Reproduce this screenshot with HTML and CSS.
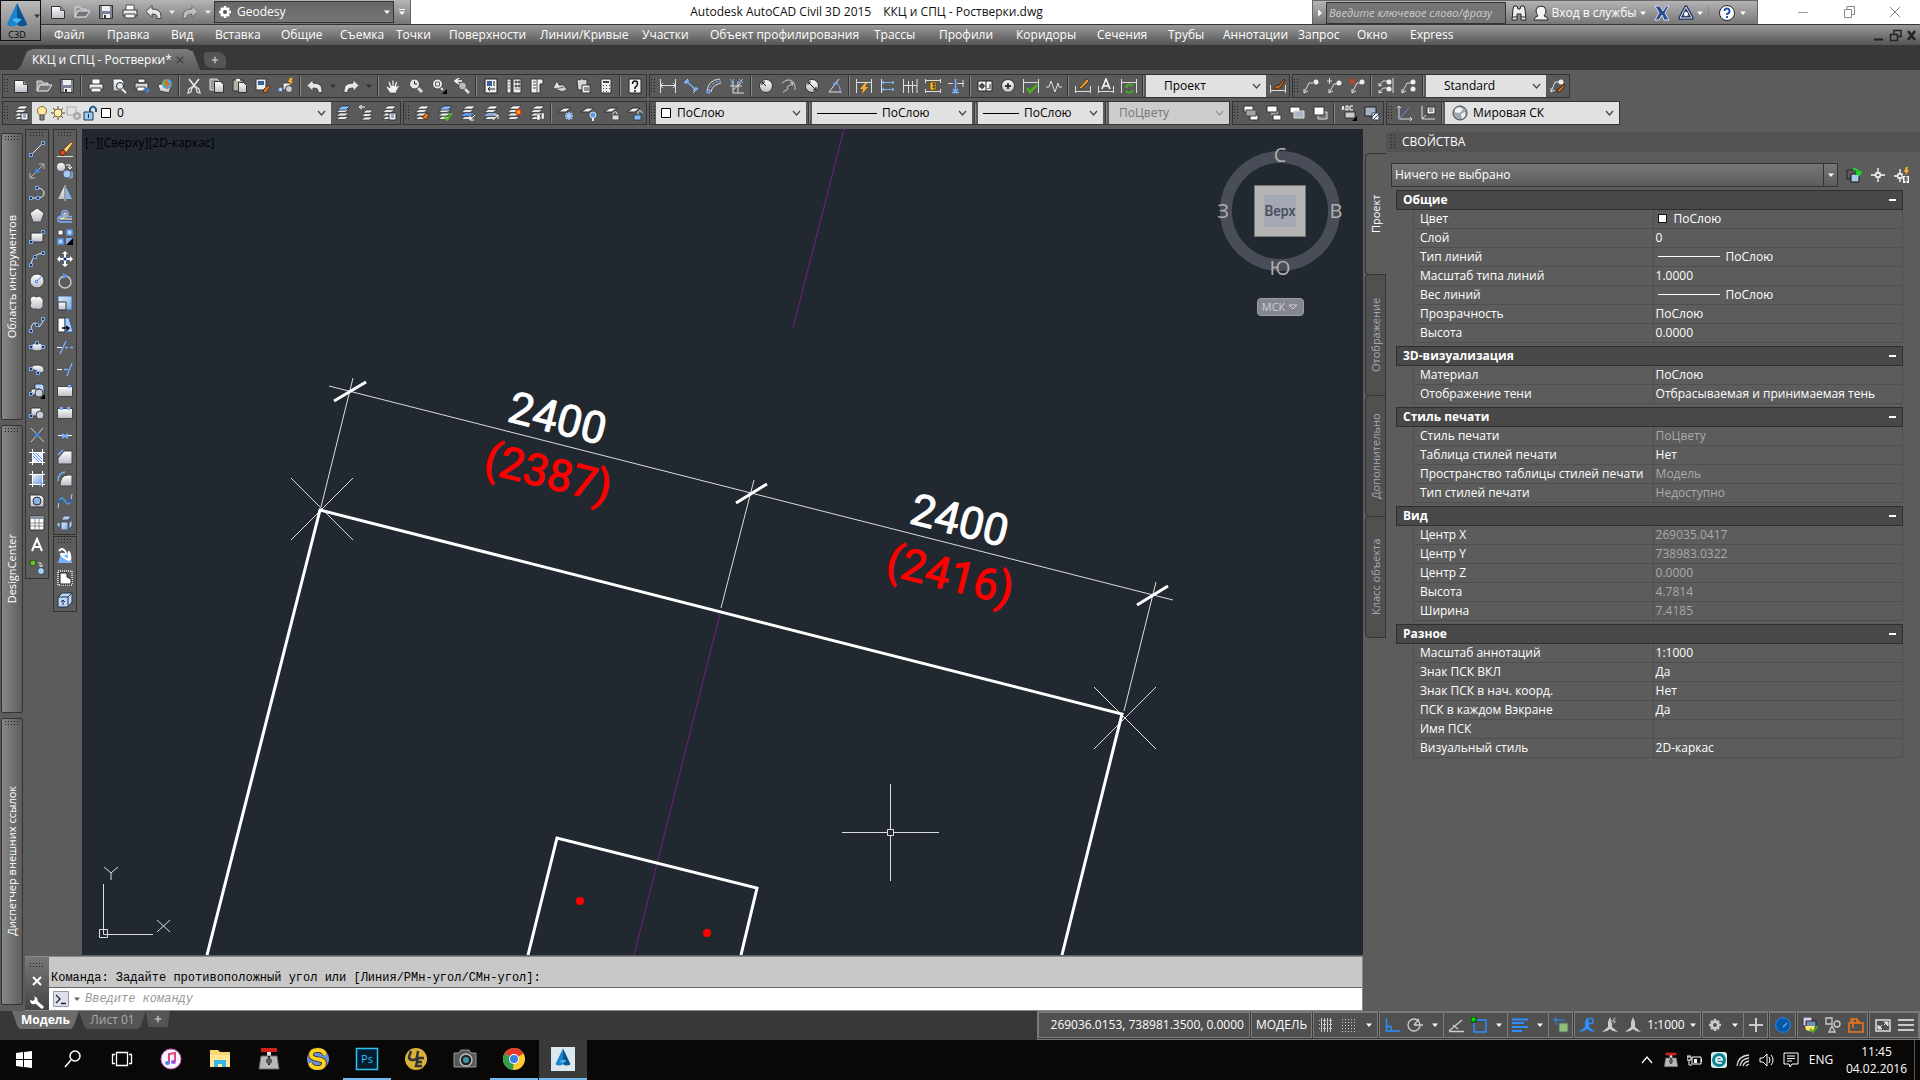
FILE: index.html
```html
<!DOCTYPE html>
<html lang="ru">
<head>
<meta charset="utf-8">
<title>Autodesk AutoCAD Civil 3D 2015</title>
<link rel="stylesheet" href="styles.css">
</head>
<body>
<svg class="sprite" aria-hidden="true">
  <defs>
    <linearGradient id="gw" x1="0" y1="0" x2="0" y2="1"><stop offset="0" stop-color="#fff"/><stop offset="1" stop-color="#b9bcc6"/></linearGradient>
    <linearGradient id="gb" x1="0" y1="0" x2="1" y2="1"><stop offset="0" stop-color="#dcebff"/><stop offset="1" stop-color="#7fa6d8"/></linearGradient>
  </defs>
  <symbol id="new" viewBox="0 0 16 16"><path d="M1.500 2.500h9l4 4v8h-13z" fill="url(#gw)" stroke="#333"/><path d="M10.500 2.500v4h4" fill="#999" stroke="#555"/></symbol>
  <symbol id="open" viewBox="0 0 16 16"><path d="M1 13V3h5l1 2h5v2" fill="#999" stroke="#ddd"/><path d="M1 13l3-6h12l-4 6z" fill="#70757d" stroke="#eee"/></symbol>
  <symbol id="save" viewBox="0 0 16 16"><path d="M1.500 1.500h13v13h-13z" fill="#7b8494" stroke="#333"/><path d="M4 2h8v5H4zM5 10h7v4H5z" fill="#eee"/><path d="M6 11h2v3H6z" fill="#333"/></symbol>
  <symbol id="print" viewBox="0 0 16 16"><path d="M4 1h8v6H4z" fill="#fff" stroke="#555"/><path d="M1 6h14v6H1z" fill="url(#gw)" stroke="#333"/><path d="M3 10h10v4H3z" fill="#f4f4f4" stroke="#444"/></symbol>
  <symbol id="preview" viewBox="0 0 16 16"><path d="M2 1h8l3 3v9H2z" fill="url(#gw)" stroke="#444"/><circle cx="9" cy="8" r="3.500" fill="#dfe8f2" stroke="#222"/><path d="M11 11l4 4" stroke="#eee" stroke-width="2"/></symbol>
  <symbol id="plot" viewBox="0 0 16 16"><path d="M4 1h7v4H4zM1 5h13v6H1z" fill="url(#gw)" stroke="#333"/><path d="M3 9h8v4H3z" fill="#fff" stroke="#444"/><path d="M9 12h5m-2-2l3 2-3 3" fill="none" stroke="#3d82e0" stroke-width="1.500"/></symbol>
  <symbol id="globe" viewBox="0 0 16 16"><path d="M1 7l7-2 6 3-2 7-9-2z" fill="url(#gw)" stroke="#444"/><circle cx="10" cy="6" r="5" fill="#4aa8d8"/><path d="M7 2l3 3-2 3-3-2z" fill="#74b83a"/><path d="M10 1v10M7 4l7 3" stroke="#e56b1f" stroke-width="1.500"/></symbol>
  <symbol id="cut" viewBox="0 0 16 16"><path d="M3 1l7 9M13 1L6 10" stroke="#eee" stroke-width="1.500"/><path d="M6 9l-3 2-1 4 3-1zM10 9l3 2 1 4-3-1z" fill="none" stroke="#ddd" stroke-width="1.300"/></symbol>
  <symbol id="copy" viewBox="0 0 16 16"><path d="M1 1h7l2 2v9H1z" fill="#999" stroke="#ddd"/><path d="M5.500 3.500h6l3 3v8h-9z" fill="url(#gw)" stroke="#333"/></symbol>
  <symbol id="paste" viewBox="0 0 16 16"><path d="M1 2h10v11H1z" fill="#b6b0a2" stroke="#333"/><path d="M4 1h4v2H4z" fill="#eee"/><path d="M6.500 4.500h5l3 3v7h-8z" fill="url(#gw)" stroke="#333"/></symbol>
  <symbol id="match" viewBox="0 0 16 16"><path d="M1 1h10v11H1z" fill="#eee" stroke="#333"/><path d="M3 3h6v4H3z" fill="#3b5f9d"/><path d="M9 11l5-4 1 2-4 6-3-1z" fill="#d0762a" stroke="#5d2c08"/></symbol>
  <symbol id="bedit" viewBox="0 0 16 16"><path d="M5 5h7v7H5z" fill="url(#gw)" stroke="#444"/><circle cx="11" cy="11" r="3.500" fill="#c8cdd6" stroke="#444"/><path d="M1 10h3v3H1z" fill="#fff" stroke="#5a96f0"/><path d="M12 0l-2 4h2l-1 4 4-5h-2l2-3z" fill="#ffb32b"/></symbol>
  <symbol id="undo" viewBox="0 0 16 16"><path d="M6 1.500V5q9 0 9 7v2.500h-4V12q0-2-5-2v3.500L0 7.500z" fill="#e6e6e6" stroke="#444"/></symbol>
  <symbol id="redo" viewBox="0 0 16 16"><path d="M10 1.500V5q-9 0-9 7v2.500h4V12q0-2 5-2v3.500l6-6z" fill="#e6e6e6" stroke="#444"/></symbol>
  <symbol id="pan" viewBox="0 0 16 16"><path d="M5 15l-4-6 1-1 3 2-2-6 1.500-1 2.500 5V2h2v6l2-5 1.500 1-1 5 2-2 1 1-3 5v2z" fill="#f2f2f2" stroke="#444" stroke-width=".7"/></symbol>
  <symbol id="zoomrt" viewBox="0 0 16 16"><path d="M10 10l4 4" stroke="#ddd" stroke-width="3"/><circle cx="6.500" cy="6" r="5" fill="#e7e7e7" stroke="#444"/><path d="M6.500 3v3H9" fill="none" stroke="#222"/></symbol>
  <symbol id="zoomwin" viewBox="0 0 16 16"><circle cx="6.500" cy="6" r="5" fill="#e7e7e7" stroke="#444"/><path d="M4.500 4h4v4h-4z" fill="none" stroke="#666"/><path d="M10 10l2 2" stroke="#ddd" stroke-width="2"/><path d="M16 11v5h-5z" fill="#000"/></symbol>
  <symbol id="zoomprev" viewBox="0 0 16 16"><circle cx="8.500" cy="8" r="4" fill="#bbb" stroke="#444"/><path d="M11 11l4 4" stroke="#ddd" stroke-width="2.500"/><path d="M8 3H2m3-3L1 3l4 3" fill="none" stroke="#fff" stroke-width="1.500"/></symbol>
  <symbol id="props" viewBox="0 0 16 16"><path d="M2 1h12v14H2z" fill="#eee" stroke="#222"/><path d="M4 3h5v5H4z" fill="#3b6199"/><path d="M11 3v5M5 11h7M7 9l-2 2 2 2" fill="none" stroke="#222"/></symbol>
  <symbol id="dcenter" viewBox="0 0 16 16"><path d="M1 1h4v14H1zM7 1h8v14H7z" fill="#eee" stroke="#333"/><path d="M2 4h2M2 7h2M2 10h2M9 3h2v2H9zM12 3h2v2h-2zM9 7h2v2H9zM12 7h2v2h-2zM9 11h5" fill="#667" stroke="#444" stroke-width=".6"/></symbol>
  <symbol id="toolpal" viewBox="0 0 16 16"><path d="M2 1h12v5h-3v9H2z" fill="#eee" stroke="#333"/><path d="M4 4h3M4 7h3M4 10h3M8 1v14" stroke="#555"/></symbol>
  <symbol id="sheet" viewBox="0 0 16 16"><path d="M1 10l4-7 2 4h5l3 5-5 2z" fill="url(#gw)" stroke="#444"/><path d="M3 11l9-2" stroke="#666"/></symbol>
  <symbol id="markup" viewBox="0 0 16 16"><path d="M2 3q1-3 3-1 2-3 4 0 3-2 3 1v9H3z" fill="#d9d9d9" stroke="#333"/><path d="M7 7h8v8H7z" fill="#eee" stroke="#333"/><path d="M9 10h5M9 12h5" stroke="#333"/></symbol>
  <symbol id="calc" viewBox="0 0 16 16"><path d="M3 1h10v14H3z" fill="#eee" stroke="#333"/><path d="M5 3h6v2H5zM5 7h1v1H5zM8 7h1v1H8zM11 7h1v1h-1zM5 10h1v1H5zM8 10h1v1H8zM11 10h1v1h-1zM5 13h1v1H5zM8 13h1v1H8z" fill="#444"/></symbol>
  <symbol id="help" viewBox="0 0 16 16"><path d="M2 1h12v14H2z" fill="#f4f4f4" stroke="#222"/><path d="M5.500 6q0-3 2.500-3t2.500 2.500T8 9.500V11m0 1v2" fill="none" stroke="#111" stroke-width="1.500"/></symbol>
  <symbol id="dlin" viewBox="0 0 16 16"><path d="M.5 1v14M15.500 1v14M1 7.500h14M3 5L.500 7.500 3 10M13 5l2.500 2.500L13 10" fill="none" stroke="#ddd"/></symbol>
  <symbol id="dali" viewBox="0 0 16 16"><path d="M1 5l4-4M10 15l5-5" stroke="#ddd"/><path d="M3 3l10 9M3 6V3h3M13 9v3h-3" fill="none" stroke="#7ab0ff" stroke-width="1.500"/></symbol>
  <symbol id="darc" viewBox="0 0 16 16"><path d="M1 13Q2 2 14 1M5 14q1-7 10-9" fill="none" stroke="#ddd"/><path d="M3 14Q4 4 15 3" fill="none" stroke="#7ab0ff" stroke-dasharray="3 1"/><path d="M1 12h3v3H1z" fill="none" stroke="#7ab0ff"/></symbol>
  <symbol id="dord" viewBox="0 0 16 16"><path d="M4 3v12h11M1 8h12M9 3v12M4 12l8-7" fill="none" stroke="#ddd"/><path d="M10 1l4 4m0-4l-4 4M1 1l2 3 2-3M3 4v3" fill="none" stroke="#7ab0ff"/></symbol>
  <symbol id="drad" viewBox="0 0 16 16"><circle cx="8" cy="8" r="6.500" fill="url(#gw)" stroke="#333"/><path d="M8 8L4 4m0 3V4h3" fill="none" stroke="#111"/></symbol>
  <symbol id="djog" viewBox="0 0 16 16"><path d="M1 5q4-4 8-3 6 2 5 10M2 14l5-3-1-2 6-4M9 4l3 1-1 3" fill="none" stroke="#ccc"/></symbol>
  <symbol id="ddia" viewBox="0 0 16 16"><circle cx="8" cy="8" r="6.500" fill="url(#gw)" stroke="#333"/><path d="M4 4l8 8M4 7V4h3M12 9v3H9" fill="none" stroke="#111"/></symbol>
  <symbol id="dang" viewBox="0 0 16 16"><path d="M12 1L2 14h13" fill="none" stroke="#ddd"/><path d="M8 5q6 2 5 9M11 5H7v3" fill="none" stroke="#7ab0ff"/></symbol>
  <symbol id="qdim" viewBox="0 0 16 16"><path d="M.5 1v14M15.500 1v14M1 4.500h14" stroke="#ddd"/><path d="M9 5l-5 6h3l-1 5 6-7H9l2-4z" fill="#ffa928"/></symbol>
  <symbol id="dbase" viewBox="0 0 16 16"><path d="M2.500 1v14M14 3v3M14 10v3" stroke="#ddd"/><path d="M3 4.500h12M3 11.500h12M5 3L3 4.500 5 6M5 10l-2 1.500L5 13" fill="none" stroke="#7ab0ff"/></symbol>
  <symbol id="dcont" viewBox="0 0 16 16"><path d="M1.500 1v14M6.500 3v12M10.500 3v12M15 1v14M1 7.500h14" stroke="#ddd"/></symbol>
  <symbol id="dspace" viewBox="0 0 16 16"><path d="M.5 1v4M15.500 1v4M1 2.500h14M.5 11v4M15.500 11v4M1 13.500h14" stroke="#ddd"/><path d="M5 4h6v8H5z" fill="#ffc42e" stroke="#6a4a00"/><path d="M9 5v6M7 6h3M7 9h3" stroke="#333"/></symbol>
  <symbol id="dbreak" viewBox="0 0 16 16"><path d="M0 5.500h5M9 5.500h7M15 2v7" stroke="#ddd"/><path d="M7.500 1v13M4 14.500h7M5 11l2.500 3 2.500-3" fill="none" stroke="#7ab0ff" stroke-width="1.500"/></symbol>
  <symbol id="tol" viewBox="0 0 16 16"><path d="M1 3h14v10H1z" fill="#f4f4f4" stroke="#222"/><circle cx="5" cy="8" r="2" fill="none" stroke="#222"/><path d="M2 8h6M5 5v6M9 3v10M10.500 10.500h1M13 6v5" stroke="#222"/></symbol>
  <symbol id="cmark" viewBox="0 0 16 16"><circle cx="8" cy="8" r="6.500" fill="url(#gw)" stroke="#333"/><path d="M8 5v6M5 8h6" stroke="#111" stroke-width="1.500"/></symbol>
  <symbol id="dinsp" viewBox="0 0 16 16"><path d="M.5 1v14M15.500 1v14M1 4.500h14" stroke="#ddd"/><path d="M4 10l3 4 7-7" fill="none" stroke="#4ab020" stroke-width="2.500"/></symbol>
  <symbol id="djline" viewBox="0 0 16 16"><path d="M0 9h3l2-6 4 11 3-9 1 4h3" fill="none" stroke="#ddd"/></symbol>
  <symbol id="dedit" viewBox="0 0 16 16"><path d="M.5 8v7M15.500 8v7M1 13.500h14" stroke="#ddd"/><path d="M4 10l8-9 2 2-8 8z" fill="#f1a13d" stroke="#6a3b00"/></symbol>
  <symbol id="dtedit" viewBox="0 0 16 16"><path d="M.5 8v7M15.500 8v7M1 13.500h14" stroke="#ddd"/><path d="M4 11L8 1l4 10M5.500 8h5" fill="none" stroke="#fff" stroke-width="1.500"/></symbol>
  <symbol id="dupd" viewBox="0 0 16 16"><path d="M.5 1v14M15.500 1v14M1 4.500h14" stroke="#ddd"/><path d="M12 8a4 4 0 0 0-7 2M5 13a4 4 0 0 0 7-1" fill="none" stroke="#4ab020" stroke-width="2"/></symbol>
  <symbol id="dstyle" viewBox="0 0 16 16"><path d="M.5 7v8M15.500 7v8M1 12.500h14" stroke="#ddd"/><path d="M4 11q0-4 5-4l5-6 1 1-4 7q-2 3-7 2z" fill="#b0632a" stroke="#4c2306"/></symbol>
  <symbol id="ml" viewBox="0 0 16 16"><path d="M1 15L6 5h4M1 11v4l4-2" fill="none" stroke="#ddd"/><circle cx="13" cy="4" r="2.500" fill="#eee"/></symbol>
  <symbol id="mladd" viewBox="0 0 16 16"><path d="M3 15L8 6h3M3 11v4l4-2M1 3h5M3.500 0v6" fill="none" stroke="#ddd"/><circle cx="13" cy="5" r="2.500" fill="#eee"/></symbol>
  <symbol id="mlrem" viewBox="0 0 16 16"><path d="M3 15L8 5h3M3 11v4l4-2" fill="none" stroke="#ddd"/><circle cx="13" cy="4" r="2.500" fill="#eee"/><path d="M1 1l5 5m0-5L1 6" stroke="#e33b1c" stroke-width="1.500"/></symbol>
  <symbol id="mlal" viewBox="0 0 16 16"><path d="M1 8l4-5h5M1 15l4-5h5M15 0v15M1 5v3l3-1M1 12v3l3-1" fill="none" stroke="#ddd"/><circle cx="11" cy="4" r="2.500" fill="#eee"/><circle cx="11" cy="11" r="2.500" fill="#eee"/></symbol>
  <symbol id="mlcol" viewBox="0 0 16 16"><path d="M1 15L6 5h4M1 11v4l4-2" fill="none" stroke="#ddd"/><circle cx="12" cy="4" r="2.500" fill="#eee"/><circle cx="12" cy="11" r="2.500" fill="#eee"/></symbol>
  <symbol id="mlstyle" viewBox="0 0 16 16"><path d="M1 14L5 4h4M1 10v4l4-2" fill="none" stroke="#ddd"/><circle cx="11" cy="4" r="2.500" fill="#eee"/><path d="M7 14q0-4 3-4l4-4 1 1-3 5q-2 3-5 2z" fill="#c2722f" stroke="#4c2306"/></symbol>
  <symbol id="stack" viewBox="0 0 16 16"><path d="M1 14.500h9l4-3H5zM1 11h9l4-3H5zM1 7.500h9l4-3H5z" fill="#e4e6ea" stroke="#333" stroke-width=".7"/><path d="M3 4h9l3-3H7z" fill="#fff" stroke="#333" stroke-width=".7"/></symbol>
  <symbol id="stacklist" viewBox="0 0 16 16"><use href="#stack"/><path d="M8 8h7v7H8z" fill="#eee" stroke="#333"/><path d="M10 10h3M10 12h3" stroke="#3b6199"/></symbol>
  <symbol id="stackblue" viewBox="0 0 16 16"><use href="#stack"/><path d="M2 5h9l4-4H7z" fill="#8dbbf5" stroke="#234" stroke-width=".8"/></symbol>
  <symbol id="stackprev" viewBox="0 0 16 16"><path d="M3 15h8l4-3H7zM3 11.500h8l4-3H7zM5 8h7l3-3H8z" fill="#e4e6ea" stroke="#333" stroke-width=".7"/><path d="M7 2H2m2-2L1 2l3 2" fill="none" stroke="#fff"/></symbol>
  <symbol id="stackbrush" viewBox="0 0 16 16"><use href="#stack"/><path d="M8 12l5-4 2 2-3 5z" fill="#d77a2c" stroke="#5d2c08"/></symbol>
  <symbol id="stackcheck" viewBox="0 0 16 16"><use href="#stackblue"/><path d="M7 11l3 4 5-7" fill="none" stroke="#4fc01e" stroke-width="2"/></symbol>
  <symbol id="stackin" viewBox="0 0 16 16"><use href="#stack"/><path d="M1 11h9l4-3H5z" fill="#5a96f0"/><path d="M15 10l-5 5m0-4v4h4" fill="none" stroke="#fff"/></symbol>
  <symbol id="stackout" viewBox="0 0 16 16"><use href="#stack"/><path d="M1 11h9l4-3H5z" fill="#8ea9df"/><path d="M10 15l5-5m-4 0h4v4" fill="none" stroke="#fff"/></symbol>
  <symbol id="stackiso" viewBox="0 0 16 16"><use href="#stack"/><circle cx="12.500" cy="7" r="2.500" fill="#ffb028" stroke="#d83c00" stroke-width="1.300"/></symbol>
  <symbol id="stackwalk" viewBox="0 0 16 16"><use href="#stack"/><path d="M8 9h3v6H8zM12.500 8h2.500v6h-2.500z" fill="#fff" stroke="#555" stroke-width=".5"/></symbol>
  <symbol id="flat" viewBox="0 0 16 16"><path d="M0 7h8l5-4H6z" fill="#eee" stroke="#333"/></symbol>
  <symbol id="frz" viewBox="0 0 16 16"><use href="#flat"/><path d="M11 7v8M7 11h8M8 8l6 6M14 8l-6 6" stroke="#a9ceff" stroke-width="1.500"/></symbol>
  <symbol id="off" viewBox="0 0 16 16"><use href="#flat"/><circle cx="12" cy="10" r="3" fill="#5a9ae8" stroke="#cde"/><path d="M11 13h2v3h-2z" fill="#eee"/></symbol>
  <symbol id="lock" viewBox="0 0 16 16"><use href="#flat"/><path d="M9 10V8q2-3 4 0v2" fill="none" stroke="#ddd"/><path d="M8 10h7v5H8z" fill="#ddd" stroke="#444"/></symbol>
  <symbol id="unlock" viewBox="0 0 16 16"><use href="#flat"/><path d="M11 10V7q2-3 4 0v1" fill="none" stroke="#cde"/><path d="M7 10h7v5H7z" fill="#8cbcf5" stroke="#245"/></symbol>
  <symbol id="bulb" viewBox="0 0 16 16"><circle cx="8" cy="6" r="4.500" fill="#ffe9a0" stroke="#8a6d1d"/><path d="M6 10h4v5H6z" fill="#888" stroke="#444"/></symbol>
  <symbol id="sun" viewBox="0 0 16 16"><path d="M8 1v14M1 8h14M3 3l10 10M13 3L3 13" stroke="#554e35"/><circle cx="8" cy="8" r="4" fill="#fff1b4" stroke="#8a6d1d"/></symbol>
  <symbol id="vpf" viewBox="0 0 16 16"><path d="M1 2h9v8H1z" fill="none" stroke="#aaa"/><circle cx="11" cy="11" r="4" fill="#aaa"/><circle cx="11" cy="11" r="1.500" fill="#ddd"/></symbol>
  <symbol id="open-lock" viewBox="0 0 16 16"><path d="M8 7V4q3-5 6 0v3" fill="none" stroke="#245b86" stroke-width="2"/><path d="M2 7h9v8H2z" fill="#9ccbe8" stroke="#173c5a"/><path d="M6.500 9v4" stroke="#173c5a"/></symbol>
  <symbol id="sq" viewBox="0 0 16 16"><path d="M3.500 3.500h9v9h-9z" fill="#fff" stroke="#000"/></symbol>
  <symbol id="chev" viewBox="0 0 16 16"><path d="M5 6l3.500 4L12 6" fill="none" stroke="#444" stroke-width="1.200"/></symbol>
  <symbol id="do1" viewBox="0 0 16 16"><path d="M1 1h9v6H1zM7 10h8v5H7z" fill="#fff" stroke="#333"/><path d="M3 5h10v6H3z" fill="#9fa6ab" stroke="#444"/></symbol>
  <symbol id="do2" viewBox="0 0 16 16"><path d="M4 5h9v6H4z" fill="#999" stroke="#444"/><path d="M1 1h10v6H1zM7 10h8v5H7z" fill="#fff" stroke="#333"/></symbol>
  <symbol id="do3" viewBox="0 0 16 16"><path d="M1 2h10v6H1z" fill="#fff" stroke="#333"/><path d="M5 6h10v7H5z" fill="#aab5c5" stroke="#ddd"/></symbol>
  <symbol id="do4" viewBox="0 0 16 16"><path d="M6 7h9v7H6z" fill="#777" stroke="#ddd"/><path d="M2 2h10v8H2z" fill="#fff" stroke="#333"/></symbol>
  <symbol id="abc" viewBox="0 0 16 16"><path d="M1 5l1-4 1 4M5 1v4h2V1zM12 1H9v4h3" fill="none" stroke="#fff"/><path d="M4 7h10v6H4z" fill="#ccc" stroke="#333"/><path d="M16 11v5h-5z" fill="#000"/></symbol>
  <symbol id="hb" viewBox="0 0 16 16"><path d="M1 2h11v9H1z" fill="#a5b2c6" stroke="#222"/><path d="M8 8h7v7H8z" fill="#eee" stroke="#345"/><path d="M8 12l4-4M9 15l6-6" stroke="#345"/></symbol>
  <symbol id="ucs" viewBox="0 0 16 16"><path d="M2 1v13h13M0 3l2-2 2 2M13 12l2 2-2 2" fill="none" stroke="#ddd"/><path d="M2 14L12 3" stroke="#5a96f0"/></symbol>
  <symbol id="ucsn" viewBox="0 0 16 16"><path d="M2 1v13h13M2 14l4-4" fill="none" stroke="#ddd"/><path d="M7 2h8v7H7z" fill="#eee" stroke="#333"/><path d="M9 4h4M9 6h4" stroke="#444"/></symbol>
  <symbol id="world" viewBox="0 0 16 16"><circle cx="8" cy="8" r="7" fill="#9aabad" stroke="#445"/><path d="M3 4l4-2 4 2-2 3-3 1-3-1zM9 9l4-2v4l-3 3z" fill="#f4f4f4"/></symbol>
  <symbol id="line" viewBox="0 0 16 16"><path d="M2 14L14 2" stroke="#eee"/><path d="M.5 12.500h3v3h-3zM12.500.5h3v3h-3z" fill="#234" stroke="#7ab0ff"/></symbol>
  <symbol id="xline" viewBox="0 0 16 16"><path d="M2 14L14 2M10 1h5v5M1 10v5h5" fill="none" stroke="#bbb"/><path d="M6 6h4v4H6z" fill="#3c86f0"/></symbol>
  <symbol id="pline" viewBox="0 0 16 16"><path d="M2 13h8q5-1 5-5t-6-5" fill="none" stroke="#eee"/><path d="M.5 11.500h3v3h-3zM7.500 11.500h3v3h-3zM6.500 1.500h3v3h-3z" fill="#234" stroke="#7ab0ff"/></symbol>
  <symbol id="polygon" viewBox="0 0 16 16"><path d="M8 1l7 5-3 9H4L1 6z" fill="url(#gw)" stroke="#444"/></symbol>
  <symbol id="rect" viewBox="0 0 16 16"><path d="M2 4h12v9H2z" fill="url(#gw)" stroke="#333"/><path d="M.5 11.500h3v3h-3zM12.500 1.500h3v3h-3z" fill="#234" stroke="#7ab0ff"/></symbol>
  <symbol id="arc" viewBox="0 0 16 16"><path d="M2 14Q3 3 14 2" fill="none" stroke="#eee"/><path d="M.5 12.500h3v3h-3zM4.500 4.500h3v3h-3zM12.500.5h3v3h-3z" fill="#234" stroke="#7ab0ff"/></symbol>
  <symbol id="circle" viewBox="0 0 16 16"><circle cx="8" cy="8" r="7" fill="url(#gw)" stroke="#444"/><path d="M8 8l4-4M6.500 7.500h2v2h-2z" fill="#fff" stroke="#3c86f0"/></symbol>
  <symbol id="rev" viewBox="0 0 16 16"><path d="M2 2q3-2 5 0 4-2 6 1 2 2 1 5 1 4-2 6-3 1-5 0-3 1-5-1-2-3 0-5-2-3 0-6z" fill="url(#gw)" stroke="#444"/></symbol>
  <symbol id="spline" viewBox="0 0 16 16"><path d="M2 14q0-8 4-8t4 3 5-7" fill="none" stroke="#eee"/><path d="M.5 12.500h3v3h-3zM6.500 6.500h3v3h-3zM12.500.5h3v3h-3z" fill="#234" stroke="#7ab0ff"/></symbol>
  <symbol id="ellipse" viewBox="0 0 16 16"><ellipse cx="8" cy="8" rx="6.500" ry="4" fill="url(#gw)" stroke="#444"/><path d="M.5 6.500h3v3h-3zM12.500 6.500h3v3h-3zM6.500 2.500h3v3h-3z" fill="#234" stroke="#7ab0ff"/></symbol>
  <symbol id="ellarc" viewBox="0 0 16 16"><path d="M2 8q0-4 6-4t7 4-5 4l-2-2z" fill="url(#gw)" stroke="#444"/><path d="M.5 6.500h3v3h-3zM7.500 10.500h3v3h-3z" fill="#234" stroke="#7ab0ff"/></symbol>
  <symbol id="insblk" viewBox="0 0 16 16"><path d="M6 1h7l2 2v9H6z" fill="#b9d5f6" stroke="#346"/><path d="M2 6h9v6H2z" fill="url(#gw)" stroke="#333"/><circle cx="10" cy="10" r="4" fill="#c8cdd6" stroke="#444"/><path d="M.5 9.500h3v3h-3z" fill="#234" stroke="#7ab0ff"/><path d="M16 11v5h-5z" fill="#000"/></symbol>
  <symbol id="mkblk" viewBox="0 0 16 16"><path d="M2 3h10v8H2z" fill="url(#gw)" stroke="#333"/><circle cx="11" cy="10" r="4" fill="#c8cdd6" stroke="#444"/><path d="M.5 9.500h3v3h-3z" fill="#234" stroke="#7ab0ff"/></symbol>
  <symbol id="point" viewBox="0 0 16 16"><path d="M2 1l13 14M14 1L2 15" stroke="#ccc"/><path d="M6 6h4v4H6z" fill="#3c86f0"/></symbol>
  <symbol id="hatch" viewBox="0 0 16 16"><path d="M4 4h9v9H4z" fill="#eaf3ff"/><path d="M4 7l6 6M4 4l9 9M7 4l6 6" stroke="#5a96f0"/><path d="M3.500 0v16M13.500 0v16M0 3.500h16M0 13.500h16" stroke="#fff"/></symbol>
  <symbol id="gradient" viewBox="0 0 16 16"><path d="M4 4h9v9H4z" fill="url(#gb)"/><path d="M3.500 0v16M13.500 0v16M0 3.500h16M0 13.500h16" stroke="#fff"/><path d="M10 16l6-7" stroke="#5a96f0"/></symbol>
  <symbol id="region" viewBox="0 0 16 16"><path d="M1 2h11l3 3v9H1z" fill="url(#gw)" stroke="#333"/><circle cx="8" cy="8" r="4" fill="#8fb1e0" stroke="#234"/></symbol>
  <symbol id="table" viewBox="0 0 16 16"><path d="M1 1h14v14H1z" fill="#fff" stroke="#333"/><path d="M1 1h14v3H1z" fill="#8592a5"/><path d="M1 8h14M1 11h14M6 4v11M10 4v11" stroke="#888"/></symbol>
  <symbol id="mtext" viewBox="0 0 16 16"><path d="M3 14L8 2l5 12M5 10h6" fill="none" stroke="#fff" stroke-width="2"/></symbol>
  <symbol id="addsel" viewBox="0 0 16 16"><circle cx="4" cy="4" r="3" fill="#6cbb35" stroke="#1d5204"/><circle cx="12" cy="12" r="3.500" fill="#a8d3f5" stroke="#245"/><path d="M9 4h3v3m-2-1l2 2 2-2" fill="none" stroke="#ddd"/></symbol>
  <symbol id="erase" viewBox="0 0 16 16"><path d="M0 15.500h16" stroke="#ddd"/><path d="M5 10L14 1l2 1-7 10z" fill="#f6cf7a" stroke="#7c4a0a"/><path d="M3 10l4-1 2 3-4 3q-2-2-2-5z" fill="#e0522a" stroke="#5d1c08"/></symbol>
  <symbol id="copyobj" viewBox="0 0 16 16"><circle cx="4" cy="4" r="4" fill="url(#gw)"/><circle cx="13" cy="12" r="3.500" fill="#7fa6d8"/><circle cx="10" cy="11" r="4" fill="#a8c8f0" stroke="#567"/><path d="M9 2h4v3m-2-1l2 2 2-2" fill="none" stroke="#fff"/></symbol>
  <symbol id="mirror" viewBox="0 0 16 16"><path d="M7 2v12H1z" fill="url(#gw)"/><path d="M9 2v12h6z" fill="#8ab5ea"/><path d="M8 0v16" stroke="#ddd"/></symbol>
  <symbol id="offset" viewBox="0 0 16 16"><path d="M15 9.500h-4V5q-3-3-6 0v4q-4 0-4 3t3 3h11" fill="none" stroke="#7ab0ff" stroke-width="1.500"/><path d="M15 12H3v-1h4V6h2v5" fill="none" stroke="#fff"/></symbol>
  <symbol id="array" viewBox="0 0 16 16"><path d="M1 1h5v5H1z" fill="#fff" stroke="#444"/><path d="M10 1h5v5h-5zM1 10h5v5H1z" fill="#b9d5f6" stroke="#5a96f0" stroke-width="1.500"/><path d="M9 9h7v7H9z" fill="#7ab0ff"/><path d="M16 9v7H9z" fill="#000"/></symbol>
  <symbol id="move" viewBox="0 0 16 16"><path d="M8 0l3 3H9v3H7V3H5zM8 16l3-3H9v-3H7v3H5zM0 8l3-3v2h3v2H3v2zM16 8l-3-3v2h-3v2h3v2z" fill="#fff"/><path d="M6.500 6.500h3v3h-3z" fill="#234" stroke="#7ab0ff"/></symbol>
  <symbol id="rotate" viewBox="0 0 16 16"><circle cx="8" cy="9" r="6" fill="none" stroke="#ccc" stroke-width="1.500"/><path d="M6 0l5 3-5 3z" fill="#5a96f0"/></symbol>
  <symbol id="scale" viewBox="0 0 16 16"><path d="M1 1h14v14H1z" fill="url(#gb)" stroke="#36609a"/><path d="M1 7h8v8H1z" fill="url(#gw)" stroke="#333"/></symbol>
  <symbol id="stretch" viewBox="0 0 16 16"><path d="M1 1h7v14H1z" fill="#fff" stroke="#333"/><path d="M8 1h4l4 14H8z" fill="#a8cdf5" stroke="#36609a"/><path d="M5 11h6m-2-2l3 2-3 3" fill="none" stroke="#000" stroke-width="1.300"/></symbol>
  <symbol id="trim" viewBox="0 0 16 16"><path d="M0 8.500h5" stroke="#fff"/><path d="M3 15L9 2M8 8.500h3M13 8.500h3" stroke="#7ab0ff" stroke-width="1.300"/></symbol>
  <symbol id="extend" viewBox="0 0 16 16"><path d="M0 8.500h5" stroke="#fff"/><path d="M7 8.500h4M10 15l5-13" stroke="#7ab0ff" stroke-width="1.300"/></symbol>
  <symbol id="breakpt" viewBox="0 0 16 16"><path d="M.5 3.500h15v10H.5z" fill="url(#gw)" stroke="#444"/><path d="M11 2h3v3h-3z" fill="#7ab0ff"/></symbol>
  <symbol id="break" viewBox="0 0 16 16"><path d="M.5 3.500h15v10H.5z" fill="url(#gw)" stroke="#444"/><path d="M3 2h3v3H3zM10 2h3v3h-3z" fill="#7ab0ff"/></symbol>
  <symbol id="join" viewBox="0 0 16 16"><path d="M1 8.500h4M11 8.500h4" stroke="#fff"/><path d="M5 6l3 2 3-2v6l-3-2-3 2z" fill="#7ab0ff"/></symbol>
  <symbol id="chamfer" viewBox="0 0 16 16"><path d="M1 15V9l6-7h8v13z" fill="url(#gw)" stroke="#444"/><path d="M1 6l5-5" stroke="#7ab0ff" stroke-width="1.500"/></symbol>
  <symbol id="fillet" viewBox="0 0 16 16"><path d="M3 15q0-11 8-11h4v11z" fill="url(#gw)" stroke="#444"/><path d="M1 10q0-8 7-9" fill="none" stroke="#7ab0ff" stroke-width="1.500"/></symbol>
  <symbol id="blend" viewBox="0 0 16 16"><path d="M1 15l1-6M14 7l1-6" stroke="#ccc"/><path d="M2 8q3-6 6 0t6 0" fill="none" stroke="#4e9af0" stroke-width="1.500"/><path d="M1 7h3v3H1zM12 6h3v3h-3z" fill="#1c62c9"/></symbol>
  <symbol id="explode" viewBox="0 0 16 16"><path d="M4 7h7v8H4z" fill="url(#gb)" stroke="#456"/><path d="M4 5l3-4h7l-3 4zM12 8l3-3v6l-3 3zM0 8l3-1v6l-3-2z" fill="#b9d5f6" stroke="#456"/></symbol>
  <symbol id="editpl" viewBox="0 0 16 16"><path d="M4 5h9l2 10H1z" fill="#7ab0ff"/><path d="M2 3q3-4 6 0t-2 3 2 4 5-3-1 5" fill="none" stroke="#fff" stroke-width="2"/></symbol>
  <symbol id="wipe" viewBox="0 0 16 16"><path d="M1 1h14v14H1z" fill="none" stroke="#ccc" stroke-dasharray="1 1" stroke-width="2"/><path d="M3 3h7v4l4 2v5H3z" fill="#fff" stroke="#222"/></symbol>
  <symbol id="solid" viewBox="0 0 16 16"><path d="M1 5l4-4h10v9l-4 5H1z" fill="#b9d5f6" stroke="#234"/><path d="M1 5h10v10M11 5l4-4M6 13V8m-2 2l2-2 2 2" fill="none" stroke="#234"/></symbol>
  <symbol id="gear" viewBox="0 0 16 16"><path d="M8 2v12M2 8h12M4 4l8 8M12 4l-8 8" stroke="currentColor" stroke-width="2.500"/><circle cx="8" cy="8" r="4.500" fill="currentColor"/><circle cx="8" cy="8" r="2" fill="#555"/></symbol>
  <symbol id="tri" viewBox="0 0 16 16"><path d="M2 5h12l-6 7z" fill="currentColor"/></symbol>
  <symbol id="man" viewBox="0 0 16 16"><path d="M8 0l2 5v5l6 5-5-1-3-2-3 2-5 1 6-5V5z" fill="currentColor"/></symbol>
  <symbol id="man1" viewBox="0 0 16 16"><use href="#man"/><circle cx="11.500" cy="4" r="2.700" fill="#505050" stroke="currentColor" stroke-width="1.300"/></symbol>
  <symbol id="man2" viewBox="0 0 16 16"><use href="#man"/><path d="M13 0l-4 5h3l-2 4 5-5h-3l2-3z" fill="currentColor" stroke="#505050" stroke-width=".7"/></symbol>
  <symbol id="valve" viewBox="0 0 24 24"><path d="M4 1h16v4H4z" fill="#d2201e"/><path d="M10 5h4v5h-4z" fill="#ddd"/><path d="M4 9h16l2 13H2z" fill="#b9bab8" stroke="#666"/><path d="M11 9h2v9h-2z" fill="#222"/><circle cx="12" cy="14" r="3" fill="#555"/></symbol>
  <symbol id="acad" viewBox="0 0 32 32"><path d="M16 2L5 25q6 4 11 0z" fill="#1b86cf"/><path d="M16 2l11 23q-6 4-11 0z" fill="#0c5590"/><path d="M11 20q5-3 10 0l-5 4z" fill="#45b8ee"/></symbol>
</svg>

<header class="title">
  <button class="appbtn" aria-label="Меню приложения"><svg class="logo"><use href="#acad"/></svg><span>C3D</span><svg class="dd"><use href="#tri"/></svg></button>
  <div class="qat">
    <button class="q" aria-label="Создать"><svg><use href="#new"/></svg></button>
    <button class="q" aria-label="Открыть"><svg><use href="#open"/></svg></button>
    <button class="q" aria-label="Сохранить"><svg><use href="#save"/></svg></button>
    <button class="q" aria-label="Печать"><svg><use href="#print"/></svg></button>
    <button class="q" aria-label="Отменить"><svg><use href="#undo"/></svg></button>
    <button class="qd" aria-label="Список отмены"><svg><use href="#tri"/></svg></button>
    <button class="q dim-btn" aria-label="Повторить"><svg><use href="#redo"/></svg></button>
    <button class="qd" aria-label="Список повтора"><svg><use href="#tri"/></svg></button>
    <div class="ws"><svg><use href="#gear"/></svg><select aria-label="Рабочее пространство"><option>Geodesy</option></select><svg class="small"><use href="#tri"/></svg></div>
    <button class="qd more" aria-label="Настройка панели"><svg viewBox="0 0 16 16"><path d="M2 2h12v2H2zM2 7h12l-6 7z" fill="#fff"/></svg></button>
  </div>
  <div class="caption"><span>Autodesk AutoCAD Civil 3D 2015</span><span>ККЦ и СПЦ - Ростверки.dwg</span></div>
  <div class="info">
    <button class="ih" aria-label="Свернуть"><svg viewBox="0 0 16 16"><path d="M5 2v12l6-6z" fill="#fff"/></svg></button>
    <input type="text" placeholder="Введите ключевое слово/фразу" aria-label="Поиск">
    <button class="ib" aria-label="Найти"><svg viewBox="0 0 16 16"><path d="M2 4l1-3h3l1 3h2l1-3h3l1 3 1 11h-5V9H6v6H1z" fill="#eee" stroke="#222"/><path d="M2 12h4M10 12h4" stroke="#222"/></svg></button>
    <button class="ib sign" aria-label="Вход в службы"><svg viewBox="0 0 16 16"><path d="M1 15q0-3 4-4-2-2-2-6 1-4 5-4t5 4q0 4-2 6 4 1 4 4z" fill="#f4f4f4" stroke="#223"/></svg><span>Вход в службы</span><svg class="small"><use href="#tri"/></svg></button>
    <button class="ib" aria-label="Exchange"><svg viewBox="0 0 16 16"><path d="M1 1h5l3 5 3-5h3l-4 7 4 7h-5L8 10l-3 5H1l4-7z" fill="#2a4d94" stroke="#dde"/></svg></button>
    <button class="ib a360" aria-label="A360"><svg viewBox="0 0 16 16"><path d="M8 2l6 11H2z" fill="none" stroke="#1e3565" stroke-width="3.500" stroke-linejoin="round"/><path d="M8 2l6 11H2z" fill="none" stroke="#eee"/><circle cx="8" cy="9" r="2" fill="#fff"/></svg><svg class="small"><use href="#tri"/></svg></button>
    <button class="ib hlp" aria-label="Справка"><svg viewBox="0 0 16 16"><circle cx="8" cy="8" r="7.500" fill="#fff" stroke="#223"/><path d="M5.500 6q0-2.500 2.500-2.500T10.500 6 8 9v1m0 1v2" fill="none" stroke="#2456b5" stroke-width="2"/></svg><svg class="small"><use href="#tri"/></svg></button>
  </div>
  <div class="win">
    <button aria-label="Свернуть"><svg viewBox="0 0 16 16"><path d="M3 8.500h10" stroke="#999"/></svg></button>
    <button aria-label="Развернуть"><svg viewBox="0 0 16 16"><path d="M3.500 5.500h7v8h-7zM6 5V2.500h7.500v8H11" fill="none" stroke="#888"/></svg></button>
    <button aria-label="Закрыть"><svg viewBox="0 0 16 16"><path d="M3 3l10 10M13 3L3 13" stroke="#888"/></svg></button>
  </div>
</header>

<nav class="menu">
  <a href="#">Файл</a><a href="#">Правка</a><a href="#">Вид</a><a href="#">Вставка</a><a href="#">Общие</a><a href="#">Съемка</a><a href="#">Точки</a><a href="#">Поверхности</a><a href="#">Линии/Кривые</a><a href="#">Участки</a><a href="#">Объект профилирования</a><a href="#">Трассы</a><a href="#">Профили</a><a href="#">Коридоры</a><a href="#">Сечения</a><a href="#">Трубы</a><a href="#">Аннотации</a><a href="#">Запрос</a><a href="#">Окно</a><a href="#">Express</a>
  <svg class="mdi" viewBox="0 0 48 16" aria-hidden="true"><path d="M2 12.500h9" stroke="#222" stroke-width="2"/><path d="M18.500 7.500h7v6h-7zM22 7V3.500h7v6h-3" fill="none" stroke="#222" stroke-width="1.500"/><path d="M36 4l7 9M43 4l-7 9" stroke="#222" stroke-width="2.500"/></svg>
</nav>

<div class="docs">
  <div class="doctab"><span>ККЦ и СПЦ - Ростверки*</span><button aria-label="Закрыть"><svg viewBox="0 0 10 10"><path d="M1 1l8 8M9 1L1 9" stroke="#444" stroke-width="2"/></svg></button></div>
  <button class="docplus" aria-label="Новый чертеж"><svg viewBox="0 0 10 10"><path d="M5 1v8M1 5h8" stroke="#bbb" stroke-width="2"/></svg></button>
</div>

<div class="bars">
  <div class="barrow">
    <div class="bar"><i class="grip"></i>
      <button aria-label="Создать"><svg><use href="#new"/></svg></button><button aria-label="Открыть"><svg><use href="#open"/></svg></button><button aria-label="Сохранить"><svg><use href="#save"/></svg></button><i class="sep"></i>
      <button aria-label="Печать"><svg><use href="#print"/></svg></button><button aria-label="Просмотр"><svg><use href="#preview"/></svg></button><button aria-label="Публикация"><svg><use href="#plot"/></svg></button><button aria-label="3D-печать"><svg><use href="#globe"/></svg></button><i class="sep"></i>
      <button aria-label="Вырезать"><svg><use href="#cut"/></svg></button><button aria-label="Копировать"><svg><use href="#copy"/></svg></button><button aria-label="Вставить"><svg><use href="#paste"/></svg></button><button aria-label="Копирование свойств"><svg><use href="#match"/></svg></button><button aria-label="Редактор блоков"><svg><use href="#bedit"/></svg></button><i class="sep"></i>
      <button aria-label="Отменить"><svg><use href="#undo"/></svg></button><button class="d" aria-label="Список отмены"><svg><use href="#tri"/></svg></button><button aria-label="Повторить"><svg><use href="#redo"/></svg></button><button class="d" aria-label="Список повтора"><svg><use href="#tri"/></svg></button><i class="sep"></i>
      <button aria-label="Панорамирование"><svg><use href="#pan"/></svg></button><button aria-label="Зумирование"><svg><use href="#zoomrt"/></svg></button><button aria-label="Рамка"><svg><use href="#zoomwin"/></svg></button><button aria-label="Предыдущий"><svg><use href="#zoomprev"/></svg></button><i class="sep"></i>
      <button aria-label="Свойства"><svg><use href="#props"/></svg></button><button aria-label="Центр управления"><svg><use href="#dcenter"/></svg></button><button aria-label="Палитры"><svg><use href="#toolpal"/></svg></button><button aria-label="Подшивки"><svg><use href="#sheet"/></svg></button><button aria-label="Пометки"><svg><use href="#markup"/></svg></button><button aria-label="Калькулятор"><svg><use href="#calc"/></svg></button><i class="sep"></i>
      <button aria-label="Справка"><svg><use href="#help"/></svg></button>
    </div>
    <div class="bar"><i class="grip"></i>
      <button aria-label="Линейный"><svg><use href="#dlin"/></svg></button><button aria-label="Параллельный"><svg><use href="#dali"/></svg></button><button aria-label="Длина дуги"><svg><use href="#darc"/></svg></button><button aria-label="Ординатный"><svg><use href="#dord"/></svg></button><i class="sep"></i>
      <button aria-label="Радиус"><svg><use href="#drad"/></svg></button><button aria-label="С изломом"><svg><use href="#djog"/></svg></button><button aria-label="Диаметр"><svg><use href="#ddia"/></svg></button><button aria-label="Угловой"><svg><use href="#dang"/></svg></button><i class="sep"></i>
      <button aria-label="Быстрый размер"><svg><use href="#qdim"/></svg></button><button aria-label="Базовый"><svg><use href="#dbase"/></svg></button><button aria-label="Цепь"><svg><use href="#dcont"/></svg></button><button aria-label="Смещение"><svg><use href="#dspace"/></svg></button><button aria-label="Разрыв размера"><svg><use href="#dbreak"/></svg></button><i class="sep"></i>
      <button aria-label="Допуск"><svg><use href="#tol"/></svg></button><button aria-label="Маркер центра"><svg><use href="#cmark"/></svg></button><button aria-label="Контроль"><svg><use href="#dinsp"/></svg></button><button aria-label="Линия с изломом"><svg><use href="#djline"/></svg></button><i class="sep"></i>
      <button aria-label="Редактировать размер"><svg><use href="#dedit"/></svg></button><button aria-label="Редактировать текст"><svg><use href="#dtedit"/></svg></button><button aria-label="Обновить размер"><svg><use href="#dupd"/></svg></button><i class="sep"></i>
      <div class="combo w120 inset"><select aria-label="Размерный стиль"><option>Проект</option></select><svg><use href="#chev"/></svg></div>
      <button aria-label="Размерные стили"><svg><use href="#dstyle"/></svg></button>
    </div>
    <div class="bar"><i class="grip"></i>
      <button aria-label="Мультивыноска"><svg><use href="#ml"/></svg></button><button aria-label="Добавить выноску"><svg><use href="#mladd"/></svg></button><button aria-label="Удалить выноску"><svg><use href="#mlrem"/></svg></button><i class="sep"></i>
      <button aria-label="Выровнять"><svg><use href="#mlal"/></svg></button><button aria-label="Собрать"><svg><use href="#mlcol"/></svg></button><i class="sep"></i>
      <div class="combo w120 inset"><select aria-label="Стиль мультивыноски"><option>Standard</option></select><svg><use href="#chev"/></svg></div>
      <button aria-label="Стили мультивыносок"><svg><use href="#mlstyle"/></svg></button>
    </div>
  </div>
  <div class="barrow">
    <div class="bar"><i class="grip"></i>
      <button aria-label="Свойства слоя"><svg><use href="#stacklist"/></svg></button>
      <div class="combo w299"><svg><use href="#bulb"/></svg><svg><use href="#sun"/></svg><svg><use href="#vpf"/></svg><svg><use href="#open-lock"/></svg><svg><use href="#sq"/></svg><select aria-label="Слой"><option>0</option></select><svg><use href="#chev"/></svg></div>
      <button aria-label="Сделать текущим"><svg><use href="#stackblue"/></svg></button><button aria-label="Предыдущее состояние"><svg><use href="#stackprev"/></svg></button><button aria-label="Состояния слоев"><svg><use href="#stacklist"/></svg></button>
    </div>
    <div class="bar"><i class="grip"></i>
      <button aria-label="Слой: соответствие"><svg><use href="#stackbrush"/></svg></button><button aria-label="На текущий слой"><svg><use href="#stackcheck"/></svg></button><button aria-label="Изолировать слой"><svg><use href="#stackin"/></svg></button><button aria-label="Отключить изоляцию"><svg><use href="#stackout"/></svg></button><button aria-label="Копировать на слой"><svg><use href="#stackiso"/></svg></button><button aria-label="Обход слоев"><svg><use href="#stackwalk"/></svg></button><i class="sep"></i>
      <button aria-label="Заморозить"><svg><use href="#frz"/></svg></button><button aria-label="Отключить"><svg><use href="#off"/></svg></button><button aria-label="Блокировать"><svg><use href="#lock"/></svg></button><button aria-label="Разблокировать"><svg><use href="#unlock"/></svg></button>
    </div>
    <div class="bar"><i class="grip"></i>
      <div class="combo w150"><svg><use href="#sq"/></svg><select aria-label="Цвет"><option>ПоСлою</option></select><svg><use href="#chev"/></svg></div><i class="sep"></i>
      <div class="combo w160"><i class="ln long"></i><select aria-label="Тип линий"><option>ПоСлою</option></select><svg><use href="#chev"/></svg></div><i class="sep"></i>
      <div class="combo w125"><i class="ln"></i><select aria-label="Вес линий"><option>ПоСлою</option></select><svg><use href="#chev"/></svg></div><i class="sep"></i>
      <div class="combo w120 off"><select aria-label="Стиль печати" disabled><option>ПоЦвету</option></select><svg><use href="#chev"/></svg></div>
    </div>
    <div class="bar"><i class="grip"></i>
      <button aria-label="На передний план"><svg><use href="#do1"/></svg></button><button aria-label="На задний план"><svg><use href="#do2"/></svg></button><button aria-label="Перед объектом"><svg><use href="#do3"/></svg></button><button aria-label="За объектом"><svg><use href="#do4"/></svg></button><i class="sep"></i>
      <button aria-label="Аннотации вперед"><svg><use href="#abc"/></svg></button><button aria-label="Штриховки назад"><svg><use href="#hb"/></svg></button>
    </div>
    <div class="bar"><i class="grip"></i>
      <button aria-label="ПСК"><svg><use href="#ucs"/></svg></button><button aria-label="Именованные ПСК"><svg><use href="#ucsn"/></svg></button><i class="sep"></i>
      <div class="combo w174"><svg><use href="#world"/></svg><select aria-label="Система координат"><option>Мировая СК</option></select><svg><use href="#chev"/></svg></div>
    </div>
  </div>
</div>

<main class="main">
  <aside class="palettes">
    <button><i class="hgrip"></i><span>Область инструментов</span></button>
    <button><i class="hgrip"></i><span>DesignCenter</span></button>
    <button><i class="hgrip"></i><span>Диспетчер внешних ссылок</span></button>
  </aside>

  <section class="center">
    <div class="work">
      <div class="vcol">
        <div class="vbar"><i class="hgrip"></i>
          <button aria-label="Отрезок"><svg><use href="#line"/></svg></button><button aria-label="Прямая"><svg><use href="#xline"/></svg></button><button aria-label="Полилиния"><svg><use href="#pline"/></svg></button><button aria-label="Многоугольник"><svg><use href="#polygon"/></svg></button><button aria-label="Прямоугольник"><svg><use href="#rect"/></svg></button><button aria-label="Дуга"><svg><use href="#arc"/></svg></button><button aria-label="Круг"><svg><use href="#circle"/></svg></button><button aria-label="Облако"><svg><use href="#rev"/></svg></button><button aria-label="Сплайн"><svg><use href="#spline"/></svg></button><button aria-label="Эллипс"><svg><use href="#ellipse"/></svg></button><button aria-label="Эллиптическая дуга"><svg><use href="#ellarc"/></svg></button><button aria-label="Вставить блок"><svg><use href="#insblk"/></svg></button><button aria-label="Создать блок"><svg><use href="#mkblk"/></svg></button><button aria-label="Точка"><svg><use href="#point"/></svg></button><button aria-label="Штриховка"><svg><use href="#hatch"/></svg></button><button aria-label="Градиент"><svg><use href="#gradient"/></svg></button><button aria-label="Область"><svg><use href="#region"/></svg></button><button aria-label="Таблица"><svg><use href="#table"/></svg></button><button aria-label="Многострочный текст"><svg><use href="#mtext"/></svg></button><button aria-label="Добавить выбранное"><svg><use href="#addsel"/></svg></button>
        </div>
      </div>
      <div class="vcol">
        <div class="vbar"><i class="hgrip"></i>
          <button aria-label="Стереть"><svg><use href="#erase"/></svg></button><button aria-label="Копировать объект"><svg><use href="#copyobj"/></svg></button><button aria-label="Зеркало"><svg><use href="#mirror"/></svg></button><button aria-label="Подобие"><svg><use href="#offset"/></svg></button><button aria-label="Массив"><svg><use href="#array"/></svg></button><button aria-label="Перенести"><svg><use href="#move"/></svg></button><button aria-label="Повернуть"><svg><use href="#rotate"/></svg></button><button aria-label="Масштаб"><svg><use href="#scale"/></svg></button><button aria-label="Растянуть"><svg><use href="#stretch"/></svg></button><button aria-label="Обрезать"><svg><use href="#trim"/></svg></button><button aria-label="Удлинить"><svg><use href="#extend"/></svg></button><button aria-label="Разорвать в точке"><svg><use href="#breakpt"/></svg></button><button aria-label="Разорвать"><svg><use href="#break"/></svg></button><button aria-label="Соединить"><svg><use href="#join"/></svg></button><button aria-label="Фаска"><svg><use href="#chamfer"/></svg></button><button aria-label="Сопряжение"><svg><use href="#fillet"/></svg></button><button aria-label="Плавное соединение"><svg><use href="#blend"/></svg></button><button aria-label="Расчленить"><svg><use href="#explode"/></svg></button>
        </div>
        <div class="vbar"><i class="hgrip"></i>
          <button aria-label="Редактировать полилинию"><svg><use href="#editpl"/></svg></button><button aria-label="Маскировка"><svg><use href="#wipe"/></svg></button><button aria-label="Вытягивание"><svg><use href="#solid"/></svg></button>
        </div>
      </div>
      <div class="canvas">
        <svg class="drawing" viewBox="82 129 1281 826" preserveAspectRatio="xMidYMid slice">
          <g class="purple"><path d="M844 129L793 328M721 610L634 955"/></g>
          <g class="thin">
            <path d="M329 386L1173 600M353 378L321 507M754 480L721 608M1156 582L1124 711"/>
            <path d="M291 478L353 540M353 478L291 540M1094 687L1156 749M1156 687L1094 749"/>
            <path d="M842 832.500h45M894 832.500h45M890.500 784v45M890.500 836v45M887.500 829.500h6v6h-6z"/>
            <path d="M103.500 884v50.500H153M99.500 929.500h8v8h-8zM104 867l7 6 7-6M111 873v7M157 920l13 12M170 920l-13 12"/>
          </g>
          <path class="tick" d="M334 401L366 382M736 503L767 484M1137 605L1168 586"/>
          <path class="thick" d="M207 955L320 510L1122 714L1062 955M528 955L557 838L757 888L741 955"/>
          <circle class="dot" cx="580" cy="901" r="4"/><circle class="dot" cx="707" cy="933" r="4"/>
          <text class="dim" transform="translate(506 421) rotate(14)">2400</text>
          <text class="dim red" transform="translate(482 472) rotate(14)">(2387)</text>
          <text class="dim" transform="translate(908 523) rotate(14)">2400</text>
          <text class="dim red" transform="translate(884 574) rotate(14)">(2416)</text>
        </svg>
        <div class="vplabel">[−][Сверху][2D-каркас]</div>
        <div class="cube">
          <svg viewBox="0 0 126 140">
            <circle cx="63" cy="69" r="54" fill="none" stroke="#484d57" stroke-width="12"/>
            <path d="M37.500 43.500h51v51h-51z" fill="#b4b4b4" stroke="#777"/><path d="M47 53h32v32H47z" fill="#a4a8b2"/>
            <g class="compass"><text x="63" y="20">С</text><text x="6" y="76">З</text><text x="119" y="76">В</text><text x="63" y="133">Ю</text></g>
            <text class="face" x="63" y="74">Верх</text>
          </svg>
          <button class="msk">МСК <svg viewBox="0 0 10 8"><path d="M1 2h8L5 6z" fill="none" stroke="#ccd"/></svg></button>
        </div>
      </div>
    </div>
    <div class="cmd">
      <div class="cmdside"><i class="hgrip"></i><button aria-label="Закрыть"><svg viewBox="0 0 16 16"><path d="M4 4l8 8M12 4l-8 8" stroke="#fff" stroke-width="2"/></svg></button><button aria-label="Настройка"><svg viewBox="0 0 16 16"><path d="M6 7l8 7" stroke="#fff" stroke-width="3"/><path d="M5 2l1 3-2 2-3-1q0 5 5 4 4-2 2-6z" fill="#fff"/></svg></button></div>
      <div class="cmdbody">
        <div class="hist">Команда: Задайте противоположный угол или [Линия/РМн-угол/СМн-угол]:</div>
        <label class="cmdin"><svg class="prompt" viewBox="0 0 16 16"><path d="M.5.5h15v15H.5z" fill="#dde1ea" stroke="#99a"/><path d="M3 4l4 4-4 4M8 12.500h5" fill="none" stroke="#223" stroke-width="1.300"/></svg><svg class="small"><use href="#tri"/></svg><input type="text" placeholder="Введите команду" aria-label="Команда"></label>
      </div>
    </div>
  </section>

  <aside class="props">
    <div class="ptabs"><button class="on">Проект</button><button>Отображение</button><button>Дополнительно</button><button>Класс объекта</button></div>
    <div class="pbody">
      <h2><i class="grip"></i>СВОЙСТВА</h2>
      <div class="psel">
        <div class="pcombo"><select aria-label="Выбор объекта"><option>Ничего не выбрано</option></select><span class="parrow"><svg class="small"><use href="#tri"/></svg></span></div>
        <button aria-label="PICKADD"><svg viewBox="0 0 16 16"><path d="M1 3h9v9H1z" fill="none" stroke="#222"/><path d="M5 7h8v8H5z" fill="#a9cbee" stroke="#111"/><path d="M7 2q5 0 6 5m-3-2l3 3 2-4" fill="none" stroke="#12e025" stroke-width="2"/></svg></button>
        <button aria-label="Выбрать объекты"><svg viewBox="0 0 16 16"><path d="M8 1v5M8 10v5M1 8h5M10 8h5M6 6h4v4H6z" fill="none" stroke="#fff" stroke-width="1.300"/></svg></button>
        <button aria-label="Быстрый выбор"><svg viewBox="0 0 16 16"><path d="M6 2v5M6 11v4M0 9h4M4 7h4v4H4z" fill="none" stroke="#fff" stroke-width="1.300"/><path d="M12 0l-2 5h2l-1 4 4-6h-2l1-3z" fill="#ffb32b"/><path d="M9 9h6v7H9z" fill="#fff"/><path d="M10 11h4M10 13h4M12 9v7" stroke="#444"/></svg></button>
      </div>
      <section><h3>Общие<button aria-label="Свернуть"></button></h3><table>
        <tr><th>Цвет</th><td><i class="swatch"></i>ПоСлою</td></tr><tr><th>Слой</th><td>0</td></tr><tr><th>Тип линий</th><td><i class="pl"></i>ПоСлою</td></tr><tr><th>Масштаб типа линий</th><td>1.0000</td></tr><tr><th>Вес линий</th><td><i class="pl"></i>ПоСлою</td></tr><tr><th>Прозрачность</th><td>ПоСлою</td></tr><tr><th>Высота</th><td>0.0000</td></tr></table></section>
      <section><h3>3D-визуализация<button aria-label="Свернуть"></button></h3><table>
        <tr><th>Материал</th><td>ПоСлою</td></tr><tr><th>Отображение тени</th><td>Отбрасываемая и принимаемая тень</td></tr></table></section>
      <section><h3>Стиль печати<button aria-label="Свернуть"></button></h3><table>
        <tr><th>Стиль печати</th><td class="ro">ПоЦвету</td></tr><tr><th>Таблица стилей печати</th><td>Нет</td></tr><tr><th>Пространство таблицы стилей печати</th><td class="ro">Модель</td></tr><tr><th>Тип стилей печати</th><td class="ro">Недоступно</td></tr></table></section>
      <section><h3>Вид<button aria-label="Свернуть"></button></h3><table>
        <tr><th>Центр X</th><td class="ro">269035.0417</td></tr><tr><th>Центр Y</th><td class="ro">738983.0322</td></tr><tr><th>Центр Z</th><td class="ro">0.0000</td></tr><tr><th>Высота</th><td class="ro">4.7814</td></tr><tr><th>Ширина</th><td class="ro">7.4185</td></tr></table></section>
      <section><h3>Разное<button aria-label="Свернуть"></button></h3><table>
        <tr><th>Масштаб аннотаций</th><td>1:1000</td></tr><tr><th>Знак ПСК ВКЛ</th><td>Да</td></tr><tr><th>Знак ПСК в нач. коорд.</th><td>Нет</td></tr><tr><th>ПСК в каждом Вэкране</th><td>Да</td></tr><tr><th>Имя ПСК</th><td></td></tr><tr><th>Визуальный стиль</th><td>2D-каркас</td></tr></table></section>
    </div>
  </aside>
</main>

<div class="status">
  <div class="ltabs"><button class="on">Модель</button><button>Лист 01</button><button class="lp" aria-label="Новый лист"><svg viewBox="0 0 10 10"><path d="M5 1v8M1 5h8" stroke="#bbb" stroke-width="2"/></svg></button></div>
  <div class="cells">
    <div class="cell coords">269036.0153, 738981.3500, 0.0000</div>
    <button class="cell">МОДЕЛЬ</button>
    <div class="cell"><button aria-label="Сетка"><svg viewBox="0 0 16 16"><path d="M3.500 1v14M6.500 1v14M9.500 1v14M12.500 1v14" stroke="#ccc"/><path d="M1 3.500h14M1 7.500h14M1 11.500h14" stroke="#ccc" stroke-dasharray="1 1"/></svg></button><button aria-label="Привязка"><svg viewBox="0 0 16 16"><path d="M1 2.500h14M1 5.500h14M1 8.500h14M1 11.500h14M1 14.500h14" stroke="#ccc" stroke-dasharray="1 2"/></svg></button><button class="d" aria-label="Список"><svg><use href="#tri"/></svg></button></div>
    <div class="cell">
      <div class="part"><button class="blue" aria-label="Орто"><svg viewBox="0 0 16 16"><path d="M2.500 1v13H16M2 9.500h5V14" fill="none" stroke="currentColor" stroke-width="1.500"/></svg></button><button aria-label="Полярное"><svg viewBox="0 0 16 16"><circle cx="7" cy="8" r="6" fill="none" stroke="#ccc" stroke-width="1.300"/><path d="M7 8h9M7 8l5-6" stroke="#ccc" stroke-width="1.300"/></svg></button><button class="d" aria-label="Список"><svg><use href="#tri"/></svg></button></div>
      <div class="part"><button aria-label="Изометрия"><svg viewBox="0 0 16 16"><path d="M1 14.500h15M1 14L14 3M5 8l5 4" stroke="#ccc" stroke-width="1.300"/></svg></button><button class="blue" aria-label="Объектная привязка"><svg viewBox="0 0 16 16"><path d="M3 3h12v12H3z" fill="none" stroke="currentColor" stroke-width="1.500"/><path d="M0 0h5v5H0z" fill="#0d0" stroke="#030"/></svg></button><button class="d" aria-label="Список"><svg><use href="#tri"/></svg></button></div>
      <div class="part"><button class="blue" aria-label="Вес линий"><svg viewBox="0 0 16 16"><path d="M0 2.500h16M0 6h12M0 10h16M0 14h10" stroke="currentColor" stroke-width="2"/></svg></button><button class="d" aria-label="Список"><svg><use href="#tri"/></svg></button></div>
      <div class="part"><button class="blue" aria-label="Циклический выбор"><svg viewBox="0 0 16 16"><path d="M3 0v8M0 3h12" stroke="currentColor"/><path d="M6 6h9v9H6z" fill="#8ebd73" stroke="#567"/></svg></button></div>
    </div>
    <div class="cell"><button class="blue" aria-label="Видимость аннотаций"><svg><use href="#man1"/></svg></button><button aria-label="Автомасштаб"><svg><use href="#man2"/></svg></button><button aria-label="Масштаб"><svg><use href="#man"/></svg></button><button class="scale">1:1000<svg class="small"><use href="#tri"/></svg></button></div>
    <div class="cell"><div class="part"><button aria-label="Рабочее пространство"><svg><use href="#gear"/></svg></button><button class="d" aria-label="Список"><svg><use href="#tri"/></svg></button></div><div class="part"><button aria-label="Добавить"><svg viewBox="0 0 16 16"><path d="M8 1v14M1 8h14" stroke="#ccc" stroke-width="2"/></svg></button></div></div>
    <div class="cell roomy"><button aria-label="Ускорение"><svg viewBox="0 0 16 16"><circle cx="8" cy="8" r="7.300" fill="#0656a8" stroke="#1b8cff"/><path d="M8 10l4-4" stroke="#54b0ff" stroke-width="1.500"/></svg></button></div>
    <div class="cell"><button aria-label="Печать"><svg viewBox="0 0 16 16"><path d="M1 0h9v9H1z" fill="#dce" stroke="#333"/><path d="M4 4h10v7H4z" fill="#6992ba" stroke="#222"/><path d="M3 9h10l-2 6-7-2z" fill="#ffe56b"/><path d="M8 12l3 3 5-6" fill="none" stroke="#4ab020" stroke-width="2"/></svg></button><button aria-label="Изолировать"><svg viewBox="0 0 16 16"><path d="M1 1h6v6H1zM4 15l3-6 3 6z" fill="none" stroke="#ccc" stroke-width="1.300"/><circle cx="12" cy="7" r="3" fill="none" stroke="#ccc" stroke-width="1.300"/></svg></button><button aria-label="Замок"><svg viewBox="0 0 16 16"><path d="M1 6h14v9H1zM3 6V2h6v4M5 3v8M9 3l3 3" fill="none" stroke="#f0731e" stroke-width="1.500"/></svg></button></div>
    <div class="cell roomy"><button aria-label="Полный экран"><svg viewBox="0 0 16 16"><path d="M1 3h14v11H1z" fill="none" stroke="#ddd" stroke-width="1.500"/><path d="M9 5h4v4zM3 8v4h4zM5 10l2-2M9 8l2-2" fill="#ddd" stroke="#ddd"/></svg></button><button aria-label="Меню"><svg viewBox="0 0 16 16"><path d="M0 3h16M0 8h16M0 13h16" stroke="#ccc" stroke-width="2"/></svg></button></div>
  </div>
</div>

<footer class="taskbar">
  <button aria-label="Пуск"><svg viewBox="0 0 24 24"><path d="M4 6l7-1v7H4zM12 5l8-1v8h-8zM4 13h7v7l-7-1zM12 13h8v8l-8-1z" fill="#fff"/></svg></button>
  <button aria-label="Поиск"><svg viewBox="0 0 24 24"><circle cx="14" cy="9" r="5" fill="none" stroke="#fff" stroke-width="1.500"/><path d="M10 13l-6 7" stroke="#fff" stroke-width="1.500"/></svg></button>
  <button aria-label="Представление задач"><svg viewBox="0 0 24 24"><path d="M6.500 5.500h11v13h-11zM5 7.500H2.500v9H5M19 7.500h2.500v9H19" fill="none" stroke="#fff" stroke-width="1.300"/></svg></button>
  <button aria-label="iTunes"><svg viewBox="0 0 24 24"><circle cx="12" cy="12" r="10" fill="#f6f2f8" stroke="#cf5fc8"/><path d="M10 16V7l6-1v8" fill="none" stroke="#e0457f" stroke-width="2"/><ellipse cx="8.500" cy="16" rx="2.500" ry="2" fill="#4a86e8"/><ellipse cx="14.500" cy="15" rx="2.500" ry="2" fill="#a050d8"/></svg></button>
  <button aria-label="Проводник"><svg viewBox="0 0 24 24"><path d="M2 3h8l2 2h10v15H2z" fill="#f7d774"/><path d="M2 8h20v12H2z" fill="#ffe794"/><path d="M6 20v-7h12v7h-4v-3h-4v3z" fill="#37b5ea"/></svg></button>
  <button aria-label="Valve"><svg><use href="#valve"/></svg></button>
  <button aria-label="S"><svg viewBox="0 0 24 24"><circle cx="12" cy="12" r="11" fill="#6d8fd4"/><path d="M19 8q-1-5-7-5-7 0-7 5 0 3 6 4 7 1 7 4 0 5-6 5-7 0-8-5" fill="none" stroke="#223" stroke-width="5.500"/><path d="M19 8q-1-5-7-5-7 0-7 5 0 3 6 4 7 1 7 4 0 5-6 5-7 0-8-5" fill="none" stroke="#ffd21f" stroke-width="4"/></svg></button>
  <button class="run" aria-label="Photoshop"><svg viewBox="0 0 24 24"><path d="M1.500 1.500h21v21h-21z" fill="#061d30" stroke="#2cc3f5" stroke-width="1.500"/><text x="12" y="16" class="ps">Ps</text></svg></button>
  <button aria-label="UltraEdit"><svg viewBox="0 0 24 24"><circle cx="12" cy="12" r="11" fill="#d9b13b"/><path d="M7 4L5 10q0 3 4 3t4-3l1-6M20 11h-6l-2 8h6M13 15h5" fill="none" stroke="#333" stroke-width="2.500"/></svg></button>
  <button aria-label="Камера"><svg viewBox="0 0 24 24"><path d="M1 6h5l2-3h8l2 3h5v14H1z" fill="#55585a" stroke="#999"/><circle cx="13" cy="13" r="6" fill="#222" stroke="#bbb" stroke-width="1.500"/><circle cx="13" cy="13" r="3" fill="#3c93a8"/></svg></button>
  <button class="run" aria-label="Chrome"><svg viewBox="0 0 24 24"><circle cx="12" cy="12" r="11" fill="#fccb2f"/><path d="M12 12L2.500 6.500A11 11 0 0 1 21.500 6.500z" fill="#e33b2e"/><path d="M12 12L2.500 6.500A11 11 0 0 0 11 23z" fill="#2f9e4f"/><circle cx="12" cy="12" r="5" fill="#fff"/><circle cx="12" cy="12" r="4" fill="#3e7de8"/></svg></button>
  <button class="run act" aria-label="AutoCAD Civil 3D"><svg viewBox="0 0 24 24"><path d="M0 0h24v24H0z" fill="#dce8f0"/><use href="#acad" width="22" height="22" x="1"/></svg></button>
  <div class="tray">
    <button aria-label="Скрытые значки"><svg viewBox="0 0 16 16"><path d="M3 11l5-6 5 6" fill="none" stroke="#fff" stroke-width="1.300"/></svg></button>
    <button aria-label="Valve"><svg><use href="#valve"/></svg></button>
    <button aria-label="Батарея"><svg viewBox="0 0 16 16"><path d="M5 5h9v7H5zM14.500 7v3M0 5h4v3H0zM1 3v2M3 3v2M2 8v5h3" fill="none" stroke="#fff"/><path d="M7 7h3v4H7z" fill="#fff"/></svg></button>
    <button aria-label="ESET"><svg viewBox="0 0 16 16"><path d="M3 0h10q3 0 3 3v10q0 3-3 3H3q-3 0-3-3V3q0-3 3-3z" fill="#d7eff2"/><circle cx="8" cy="8" r="7" fill="#0e838f"/><path d="M5 8h6q0-3-3-3T5 8t3 3h3" fill="none" stroke="#fff" stroke-width="1.500"/></svg></button>
    <button aria-label="Сеть"><svg viewBox="0 0 16 16"><path d="M2 14Q3 4 14 3M5 14q1-7 9-8M8 14q1-4 6-5M11 14q1-1 3-2" fill="none" stroke="#ddd" stroke-width="1.300"/></svg></button>
    <button aria-label="Громкость"><svg viewBox="0 0 16 16"><path d="M1 6h3l4-4v12l-4-4H1zM10 5q2 3 0 6M12 3q4 5 0 10" fill="none" stroke="#fff"/></svg></button>
    <button aria-label="Уведомления"><svg viewBox="0 0 16 16"><path d="M1 1h14v11H9l-2 3-1-3H1zM4 4h8M4 6.500h8M4 9h5" fill="none" stroke="#fff"/></svg></button>
    <button class="lang">ENG</button>
    <button class="clock"><span>11:45</span><span>04.02.2016</span></button>
  </div>
</footer>
</body>
</html>
```
FILE: styles.css
```css
* { box-sizing: border-box; }
html, body { height: 100%; }
body { margin: 0; display: flex; flex-direction: column; min-height: 100vh; background: #5c5c5c; color: #fff; font: 12px/16px "Open Sans", "Noto Sans", sans-serif; overflow: hidden; }
button, input, select { font: inherit; color: inherit; background: none; border: 0; padding: 0; margin: 0; }
select { appearance: none; outline: 0; flex: 1; min-width: 0; line-height: 18px; }
select:disabled { opacity: 1; }
button { display: flex; align-items: center; justify-content: center; }
svg { width: 16px; height: 16px; flex: none; display: block; }
svg.small { width: 8px; height: 8px; }
i { font-style: normal; }
a { color: inherit; text-decoration: none; }
h2, h3 { margin: 0; font-size: 12px; }
.sprite { position: absolute; width: 0; height: 0; }

/* Title bar */
.title { position: relative; z-index: 1; flex: none; display: flex; height: 24px; background: #fff; }
.appbtn { position: absolute; left: 0; top: 0; width: 41px; height: 41px; border: 1px solid #111; background: linear-gradient(#bbb, #777); display: grid; grid-template-columns: 32px 7px; grid-template-rows: 29px 9px; justify-content: start; }
.appbtn .logo { width: 32px; height: 30px; }
.appbtn span { grid-row: 2; font-size: 9px; line-height: 9px; color: #000; }
.appbtn .dd { grid-column: 2; grid-row: 1; width: 8px; height: 8px; color: #333; }
.qat { display: flex; align-items: center; width: 411px; padding-left: 46px; background: linear-gradient(#b4b4b4, #777); border-right: 1px solid #666; }
.q { width: 24px; height: 22px; }
.dim-btn { opacity: .5; }
.qd { width: 12px; height: 22px; color: #eee; }
.qd svg { width: 8px; height: 8px; }
.ws { display: flex; align-items: center; gap: 4px; flex: 1; height: 22px; padding: 0 2px; border: 1px solid #333; background: linear-gradient(#666, #777); }
.more { width: 16px; }
.caption { flex: 1; display: flex; justify-content: center; gap: 12px; align-items: center; color: #111; white-space: nowrap; padding-left: 10px; }
.info { display: flex; align-items: center; width: 446px; background: linear-gradient(#b4b4b4, #777); border: 1px solid #666; border-bottom: 0; }
.ih { width: 13px; }
.ih svg { width: 10px; height: 10px; }
.info input { width: 180px; height: 22px; padding: 0 2px; border: 1px solid #333; background: #747474; font-size: 11px; font-style: italic; }
input::placeholder { color: #ccc; opacity: 1; }
.ib { width: 25px; gap: 2px; }
.sign { width: 118px; }
.a360 { width: 34px; }
.hlp { flex: 1; gap: 4px; border-left: 1px solid #888; }
.win { display: flex; justify-content: flex-end; width: 162px; padding-right: 2px; }
.win button { width: 46px; }

/* Menu */
.menu { flex: none; display: grid; grid-template-columns: 53px 64px 44px 66px 59px 56px 53px 91px 102px 68px 164px 65px 77px 81px 71px 55px 75px 59px 53px 1fr 48px; align-items: center; height: 21px; padding-left: 54px; border-top: 1px solid #333; background: linear-gradient(#999, #555); white-space: nowrap; }
.mdi { width: 48px; }

/* Document tabs */
.docs { flex: none; display: flex; align-items: flex-end; gap: 4px; height: 25px; padding-left: 17px; background: #383838; }
.doctab { display: flex; align-items: center; justify-content: space-between; width: 183px; height: 21px; padding: 0 16px 0 15px; background: linear-gradient(#7c7c7c, #5c5c5c); clip-path: polygon(0 100%, 4px 80%, 10px 12%, 16px 0, 170px 0, 176px 12%, 183px 100%); white-space: nowrap; }
.doctab svg, .docplus svg, .lp svg { width: 8px; height: 8px; }
.docplus { width: 22px; height: 16px; margin-bottom: 2px; border-radius: 4px 8px 2px 8px; background: #555; }

/* Toolbars */
.bars { flex: none; display: grid; gap: 3px; padding: 4px 2px 4px; }
.barrow { display: flex; gap: 2px; }
.bar { display: flex; align-items: center; height: 24px; border: 1px solid #333; background: #5a5a5a; }
.bar > button { width: 23px; height: 22px; }
.bar > .d { width: 13px; color: #333; }
.bar > .d svg { width: 8px; height: 8px; }
.grip { width: 6px; height: 16px; flex: none; background: radial-gradient(circle, #222 1px, transparent 1px) 0 0 / 3px 3px; }
.hgrip { width: 16px; height: 6px; flex: none; background: radial-gradient(circle, #222 1px, transparent 1px) 0 0 / 3px 3px; }
.sep { width: 6px; height: 20px; flex: none; background: linear-gradient(#333, #333) 2px 0 / 1px 100% no-repeat, linear-gradient(#888, #888) 3px 0 / 1px 100% no-repeat; }
.combo { display: flex; align-items: center; height: 22px; padding: 0 2px; background: #e1e1e1; color: #000; }
.combo.inset { padding-left: 18px; }
.off { background: #ccc; color: #777; padding-left: 10px; }
.off svg { opacity: .4; }
.w120 { width: 120px; } .w125 { width: 125px; } .w150 { width: 150px; } .w160 { width: 160px; } .w174 { width: 174px; } .w299 { width: 299px; }
.w150 select, .w299 select { padding-left: 3px; }
.w174 { gap: 5px; padding-left: 7px; }
.ln { width: 36px; height: 1px; margin: 0 5px 0 3px; background: #000; }
.ln.long { width: 60px; }

/* Main area */
.main { flex: 1; min-height: 0; display: flex; }
.palettes { flex: none; width: 25px; display: flex; flex-direction: column; gap: 5px; padding: 4px 2px 6px 1px; font-size: 11px; }
.palettes button { flex: 1; flex-direction: column; border: 1px solid #333; border-radius: 2px; background: linear-gradient(90deg, #888, #5c5c5c); justify-content: flex-start; padding: 1px 0 7px; }
.palettes span { writing-mode: vertical-rl; transform: rotate(180deg); margin: auto; line-height: 18px; }
.center { flex: 1; min-width: 0; display: flex; flex-direction: column; }
.work { flex: 1; min-height: 0; display: flex; }
.vcol { width: 28px; display: flex; flex-direction: column; gap: 1px; }
.vbar { width: 24px; border: 1px solid #333; display: flex; flex-direction: column; align-items: center; }
.vbar .hgrip { margin: 1px 0; }
.vbar button { width: 22px; height: 22px; }
.canvas { position: relative; flex: 1; min-width: 0; background: #212830; overflow: hidden; margin-left: 1px; }
.drawing { width: 100%; height: 100%; }
.thin path { stroke: #ddd; fill: none; }
.purple path { stroke: #7d1b85; }
.tick { stroke: #fff; stroke-width: 3; }
.thick { stroke: #fff; stroke-width: 3; fill: none; }
.dot { fill: red; }
text.dim { fill: #fff; stroke: #fff; stroke-linejoin: round; font: 44px Roboto, sans-serif; }
text.red { fill: red; stroke: red; }
.vplabel { position: absolute; left: 3px; top: 6px; color: #000; }
.cube { position: absolute; right: 20px; top: 13px; width: 126px; display: flex; flex-direction: column; align-items: center; gap: 16px; }
.cube > svg { width: 126px; height: 140px; }
.cube text { text-anchor: middle; }
.compass text { fill: #b0b0b0; font-size: 20px; }
.cube .face { fill: #484d5c; font: 500 14px Roboto, sans-serif; }
.msk { width: 47px; height: 18px; gap: 3px; border: 1px solid #9a9caa; border-radius: 4px; background: #85878f; color: #ccd; font-size: 11px; }
.msk svg { width: 10px; height: 8px; }

/* Command line */
.cmd { flex: none; display: flex; height: 55px; margin-top: 1px; border: 1px solid #888; border-width: 1px 1px 1px 0; background: #444; }
.cmdside { width: 24px; display: flex; flex-direction: column; align-items: center; justify-content: space-between; padding-top: 5px; background: linear-gradient(#777, #444); }
.cmdbody { flex: 1; font: 12px/16px "Liberation Mono", monospace; }
.hist { height: 31px; padding: 13px 2px 0; background: #c8c8c8; color: #000; border-bottom: 1px solid #666; white-space: nowrap; }
.cmdin { display: flex; align-items: center; gap: 4px; height: 22px; padding: 0 4px; background: #fff; color: #666; }
.cmdin input { flex: 1; color: #333; font-style: italic; }
.cmdin input::placeholder { color: #999; }

/* Properties palette */
.props { flex: none; width: 557px; display: flex; padding: 3px 0 0 2px; }
.ptabs { width: 21px; padding-top: 21px; font-size: 11px; }
.ptabs button { width: 21px; height: 122px; margin-bottom: -1px; border: 1px solid #333; border-radius: 0 4px 4px 0; background: #505050; color: #aaa; writing-mode: vertical-rl; transform: rotate(180deg); }
.ptabs .on { background: #5c5c5c; color: #fff; border-left: 0; }
.pbody { flex: 1; }
h2 { display: flex; align-items: center; gap: 6px; height: 20px; padding-left: 4px; border-radius: 4px 4px 0 0; background: #525252; font-weight: 400; }
.psel { display: flex; align-items: center; gap: 8px; margin: 11px 10px 3px 5px; }
.pcombo { flex: 1; display: flex; align-items: center; height: 24px; padding-left: 3px; border: 1px solid #333; background: linear-gradient(#777, #5c5c5c); }
.parrow { display: flex; align-items: center; justify-content: center; width: 14px; height: 22px; border-left: 1px solid #333; }
.pbody section { margin: 0 17px 3px 10px; }
h3 { display: flex; align-items: center; justify-content: space-between; height: 20px; padding: 0 6px; border: 1px solid #2e2e2e; background: #484848; }
h3 button { width: 7px; height: 2px; background: #fff; }
table { width: calc(100% - 17px); margin-left: 17px; border-collapse: separate; border-spacing: 0; border-left: 1px solid #4f4f4f; table-layout: fixed; }
th, td { height: 19px; padding: 0 0 0 6px; border: 0 solid #4f4f4f; border-width: 0 1px 1px 0; font-weight: 400; text-align: left; white-space: nowrap; line-height: 16px; }
th { width: 49%; }
td { padding-left: 2px; }
.ro { color: #aaa; }
.swatch { display: inline-block; width: 9px; height: 9px; margin: 0 7px 0 2px; background: #fff; border: 1px solid #111; }
.pl { display: inline-block; width: 62px; height: 1px; margin: 0 6px 4px 2px; background: #fff; }

/* Status bar */
.status { flex: none; display: flex; justify-content: space-between; height: 29px; background: #383838; }
.ltabs { display: flex; align-items: flex-start; padding-left: 12px; }
.ltabs button { height: 18px; width: 67px; color: #aaa; background: #555; clip-path: polygon(0 0, 100% 0, 92% 85%, 88% 100%, 12% 100%, 8% 85%); }
.ltabs .on { color: #fff; font-weight: 700; background: #6c6c6c; }
.ltabs .lp { width: 24px; height: 16px; }
.cells { display: flex; gap: 1px; border: 1px solid #777; }
.cell { display: flex; align-items: center; height: 26px; border: 1px solid #7c7c7c; background: #505050; }
.cell button { width: 23px; height: 24px; color: #ccc; }
.cell .d { width: 17px; }
.cell .d svg { width: 8px; height: 8px; }
.cell .d, .cell .scale { color: #fff; }
.cell .blue { color: #2b8fff; }
.cell .scale { width: 56px; gap: 4px; }
button.cell { padding: 0 4px; }
.coords { width: 212px; justify-content: flex-end; padding-right: 5px; }
.part { display: flex; }
.part + .part { border-left: 1px solid #7c7c7c; }
.roomy { padding: 0 1px; }

/* Taskbar */
.taskbar { flex: none; display: flex; gap: 1px; height: 40px; background: #090806; }
.taskbar > button { width: 48px; height: 40px; border-bottom: 2px solid transparent; }
.taskbar > button svg { width: 24px; height: 24px; }
.taskbar > .run { border-color: #76b9ed; }
.taskbar > .act { background: #3a3a38; }
.ps { fill: #2cc3f5; font-size: 11px; text-anchor: middle; }
.tray { margin-left: auto; display: flex; align-items: center; padding-right: 5px; }
.tray button { width: 24px; height: 40px; }
.tray .lang { width: 36px; }
.tray .clock { width: 76px; flex-direction: column; line-height: 17px; border-right: 1px solid #555; }
```
